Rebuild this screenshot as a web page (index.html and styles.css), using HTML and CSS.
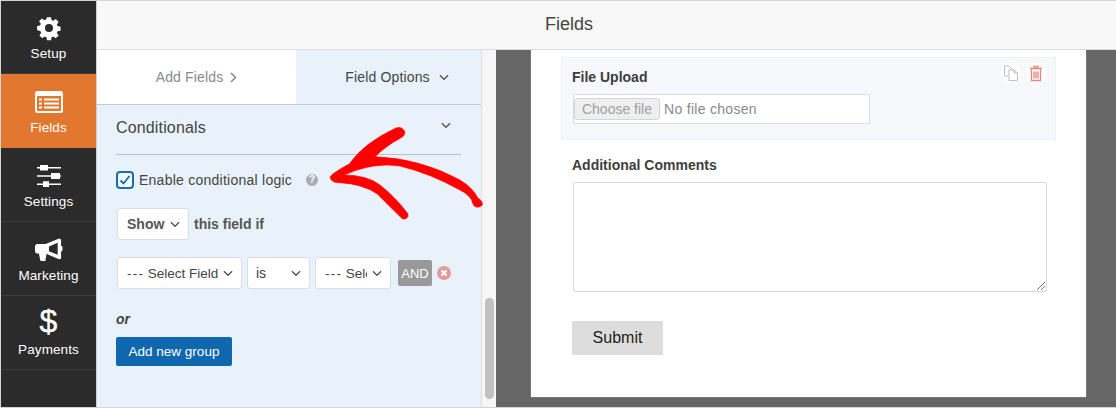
FILE: index.html
```html
<!DOCTYPE html>
<html lang="en">
<head>
<meta charset="utf-8">
<title>Fields</title>
<link rel="stylesheet" href="styles.css">
</head>
<body>
<div class="app">
  <nav class="sidebar">
    <a class="nav-item">
      <svg class="nav-icon" viewBox="0 0 28 28"><path fill-rule="evenodd" d="M11.6 1h4.8l.7 3.6 2 .8 3-2.1 3.4 3.4-2.1 3 .8 2 3.6.7v4.8l-3.6.7-.8 2 2.1 3-3.4 3.4-3-2.1-2 .8-.7 3.6h-4.8l-.7-3.6-2-.8-3 2.1-3.4-3.4 2.1-3-.8-2L-.2 16.4v-4.8l3.6-.7.8-2-2.1-3 3.4-3.4 3 2.1 2-.8zM14 9.2a4.8 4.8 0 1 0 0 9.6 4.8 4.8 0 0 0 0-9.6z" transform="translate(1.4 1.4) scale(.9)"/></svg>
      <span>Setup</span>
    </a>
    <a class="nav-item active">
      <svg class="nav-icon" viewBox="0 0 28 22"><path fill-rule="evenodd" d="M2.5 0h23A2.5 2.5 0 0 1 28 2.500v17a2.500 2.500 0 0 1-2.500 2.500h-23A2.500 2.500 0 0 1 0 19.500v-17A2.500 2.500 0 0 1 2.500 0zM2 5v14.500c0 .3.200.5.500.5h23c.3 0 .5-.2.500-.5V5zM4 7.500h3v2H4zM9 7.500h15v2H9zM4 11.500h3v2H4zM9 11.500h15v2H9zM4 15.500h3v2H4zM9 15.500h15v2H9z"/></svg>
      <span>Fields</span>
    </a>
    <a class="nav-item">
      <svg class="nav-icon nav-icon-sliders" viewBox="0 0 24 22"><path d="M0 2h3V0h8v2h13v1.500H11v2H3v-2H0zM0 10.300h14V8h9v2.300h1v1.500h-1V14h-9v-2.200H0zM0 18.500h6v-2.200h6v2.200h12V20H12v2H6v-2H0z"/></svg>
      <span>Settings</span>
    </a>
    <a class="nav-item">
      <svg class="nav-icon" viewBox="0 0 29 24"><path fill-rule="evenodd" d="M2.500 5.700H11L25 0l2 1v6.300l1.500 1.700v3L27 14v7l-2 .5-14-5.800H12L10.700 23.300H5.700L4 15.700H2.500C1 15.700 0 14.500 0 13V8.400C0 7 1 5.700 2.500 5.700zM14.500 8.300v5l9 3.500V4.500z"/></svg>
      <span>Marketing</span>
    </a>
    <a class="nav-item">
      <span class="nav-dollar">$</span>
      <span>Payments</span>
    </a>
  </nav>

  <main class="main">
    <header class="topbar">Fields</header>
    <div class="workspace">
      <section class="panel">
        <div class="tabs">
          <div class="tab tab-inactive">Add Fields
            <svg class="chev-right" viewBox="0 0 7 11"><path d="M1 1l4.500 4.500L1 10"/></svg>
          </div>
          <div class="tab tab-active">Field Options
            <svg class="chev" viewBox="0 0 11 7"><path d="M1 1l4.500 4.500L10 1"/></svg>
          </div>
        </div>
        <div class="panel-body">
          <div class="section-head">
            <h2>Conditionals</h2>
            <svg class="chev" viewBox="0 0 11 7"><path d="M1 1l4.500 4.500L10 1"/></svg>
          </div>
          <label class="check-row">
            <span class="checkbox"><svg viewBox="0 0 14 14"><path d="M2.500 7.500l3 3 6-7.500"/></svg></span>
            <span>Enable conditional logic</span>
            <span class="help">?</span>
          </label>
          <div class="show-row">
            <div class="select select-show"><span class="select-text">Show</span><svg class="chev" viewBox="0 0 11 7"><path d="M1 1l4.500 4.500L10 1"/></svg></div>
            <span class="medium">this field if</span>
          </div>
          <div class="rule-row">
            <div class="select select-field"><span class="select-text"><span class="dashes">---</span> Select Field ---</span><svg class="chev" viewBox="0 0 11 7"><path d="M1 1l4.500 4.500L10 1"/></svg></div>
            <div class="select select-is"><span class="select-text">is</span><svg class="chev" viewBox="0 0 11 7"><path d="M1 1l4.500 4.500L10 1"/></svg></div>
            <div class="select select-value"><span class="select-text"><span class="dashes">---</span> Select ---</span><svg class="chev" viewBox="0 0 11 7"><path d="M1 1l4.500 4.500L10 1"/></svg></div>
            <span class="and">AND</span>
            <svg class="remove" viewBox="0 0 14 14"><circle cx="7" cy="7" r="7"/><path d="M4.500 4.500l5 5M9.500 4.500l-5 5"/></svg>
          </div>
          <div class="or">or</div>
          <button class="add-group" type="button">Add new group</button>
        </div>
      </section>
      <div class="scroll-track"><div class="scroll-thumb"></div></div>
      <section class="preview">
        <div class="form-card">
          <div class="field field-selected">
            <div class="field-actions">
              <svg viewBox="0 0 20 20"><path d="M8 3H3.500v10H7M8 3l3 3v1M8 7h5l3.500 3v7.500H8zM13 7v3h3.500"/></svg>
              <svg class="trash" viewBox="0 0 20 20"><path d="M4 5.500h12M8 5V3.500h4V5M5.500 6.500v11h9v-11M8 8.500v7M10 8.500v7M12 8.500v7"/></svg>
            </div>
            <div class="field-label">File Upload</div>
            <div class="file-input"><span class="file-btn">Choose file</span><span class="file-name">No file chosen</span></div>
          </div>
          <div class="field field-comments">
            <div class="field-label">Additional Comments</div>
            <div class="textarea">
              <svg class="grip" viewBox="0 0 8 8"><path d="M0 8l8-8M4 8l4-4"/></svg>
            </div>
          </div>
          <button class="submit" type="button">Submit</button>
        </div>
      </section>
    </div>
  </main>

  <svg class="arrow" viewBox="0 0 510 300">
    <path d="M228 24Q245 18 254 34Q256 48 242 54Q200 76 165 110Q300 115 420 180Q460 205 472 232Q495 250 484 258Q465 268 458 250Q455 228 420 210Q330 160 240 138Q160 125 72 165Q140 165 180 195Q230 235 264 282Q266 298 248 297Q225 275 172 222Q130 192 60 188Q35 190 30 172Q35 160 88 132Q130 70 228 24Z"/>
  </svg>
</div>
</body>
</html>
```
FILE: styles.css
```css
* { box-sizing: border-box; }
html, body { margin: 0; padding: 0; }
body { font-family: "Liberation Sans", Arial, sans-serif; color: #444; background: #fff; }
.app { position: relative; display: flex; width: 1116px; height: 408px; overflow: hidden; border: 1px solid #d4d4d4; border-width: 1px 0 1px 1px; }

.sidebar { width: 95px; flex: none; background: #2b2b2b; display: flex; flex-direction: column; }
.nav-item { height: 74px; flex: none; display: flex; flex-direction: column; align-items: center; justify-content: flex-end; padding-bottom: 12px; gap: 5px; color: #fff; font-size: 13.500px; letter-spacing: .1px; line-height: 15px; border-bottom: 1px solid #3c3c3c; fill: #fff; }
.nav-item:first-child { height: 73px; }
.nav-item.active { background: #e27730; border-bottom-color: #e27730; }
.nav-icon { width: 28px; height: 26px; }
.nav-icon-sliders { width: 24px; }
.nav-dollar { font-size: 32px; line-height: 23px; height: 27px; -webkit-text-stroke: .4px #fff; }

.main { flex: 1; min-width: 0; display: flex; flex-direction: column; border-left: 1px solid #c9ced3; }
.topbar { height: 49px; flex: none; background: #f8f8f8; border-bottom: 1px solid #dcdcdc; display: flex; align-items: center; justify-content: center; font-size: 18px; color: #444; padding: 0 75px 1px 0; }
.workspace { flex: 1; min-height: 0; display: flex; }

.panel { width: 384px; flex: none; background: #e9f2fa; display: flex; flex-direction: column; }
.tabs { height: 55px; flex: none; display: flex; border-bottom: 1px solid #c3ccd6; }
.tab { display: flex; align-items: center; justify-content: center; font-size: 14px; letter-spacing: .15px; gap: 7px; }
.tab-inactive { width: 199px; background: #fff; color: #8a8a8a; }
.tab-active { flex: 1; color: #444; gap: 9px; padding-left: 17px; }
.chev, .chev-right { fill: none; stroke: #555; stroke-width: 1.500; flex: none; }
.chev { width: 10px; height: 7px; }
.chev-right { width: 7px; height: 11px; stroke: #888; }

.panel-body { padding: 0 20px 0 19px; flex: 1; display: flex; flex-direction: column; align-items: flex-start; }
.section-head { width: 345px; height: 50px; flex: none; border-bottom: 1px solid #b9c2cc; display: flex; justify-content: space-between; align-items: flex-start; padding: 13px 10px 0 0; }
.section-head h2 { margin: 0; font-size: 16px; letter-spacing: .15px; line-height: 20px; font-weight: 400; color: #444; }
.section-head .chev { margin-top: 4px; }
.check-row { display: flex; align-items: center; font-size: 14px; letter-spacing: .25px; height: 18px; margin-top: 16px; color: #444; }
.checkbox { width: 18px; height: 18px; border: 2px solid #1a6cb0; border-radius: 4px; background: #f2f7fc; margin-right: 5px; display: flex; }
.checkbox svg { width: 14px; height: 14px; fill: none; stroke: #1a6cb0; stroke-width: 1.800; }
.help { width: 12px; height: 12px; border-radius: 50%; background: #a9aeb3; color: #fff; font-size: 10px; line-height: 12px; font-weight: 700; text-align: center; margin-left: 14px; letter-spacing: 0; }
.show-row { display: flex; align-items: center; gap: 5px; margin: 19px 0 0 1px; font-size: 14px; }
.medium { font-weight: 700; color: #555; font-size: 14px; }
.select { height: 32px; background: #fff; border: 1px solid #d8dde2; border-radius: 3px; display: flex; align-items: center; font-size: 14px; color: #444; padding: 0 8px 0 9px; gap: 5px; }
.select-text { flex: 1; min-width: 0; white-space: nowrap; overflow: hidden; }
.select-show { width: 72px; font-weight: 700; color: #555; gap: 3px; }
.rule-row { display: flex; align-items: center; margin: 17px 0 0 1px; }
.select-field { width: 125px; margin-right: 5px; font-size: 13.500px; }
.select-value { font-size: 13.500px; }
.dashes { letter-spacing: 1.200px; }
.select-is { width: 63px; margin-right: 5px; padding-left: 8px; }
.select-value { width: 76px; margin-right: 7px; }
.and { width: 34px; height: 26px; background: #999; color: #fff; font-size: 13px; border-radius: 2px; display: flex; align-items: center; justify-content: center; }
.remove { width: 14px; height: 14px; margin-left: 5px; flex: none; fill: #e49a9a; }
.remove path { stroke: #fff; stroke-width: 2; fill: none; }
.or { font-style: italic; font-weight: 700; font-size: 14px; line-height: 16px; margin-top: 22px; color: #444; }
.add-group { margin-top: 10px; width: 116px; height: 29px; padding: 0; background: #0f67ad; color: #fff; border: 0; border-radius: 2px; font: 13.500px "Liberation Sans", Arial, sans-serif; }

.scroll-track { width: 15px; flex: none; background: #f6f6f6; border-left: 1px solid #d9dee3; padding: 248px 2px 8px 3px; }
.scroll-thumb { width: 9px; height: 101px; border-radius: 5px; background: #c1c1c1; }

.preview { flex: 1; min-width: 0; background: #666; padding: 0 30px 10px 35px; }
.form-card { height: 347px; background: #fff; padding: 7px 30px 0 30px; box-shadow: 0 0 1px #ccc; }
.field { position: relative; }
.field-selected { height: 83px; background: #f7f8fb; border: 1px solid #eef0f3; padding: 10px 11px 0 10px; }
.field-label { font-weight: 700; font-size: 14px; line-height: 18px; color: #3d3d3d; }
.field-actions { position: absolute; top: 5px; right: 9px; display: flex; gap: 5px; }
.field-actions svg { width: 20px; height: 20px; background: #fff; border-radius: 50%; fill: none; stroke: #bdbdbd; stroke-width: 1; }
.field-actions .trash { stroke: #e8847c; stroke-width: 1.300; }
.file-input { width: 297px; height: 30px; margin: 8px 0 0 1px; background: #fff; border: 1px solid #dcdcdc; display: flex; align-items: center; padding-left: 0; gap: 4px; font-size: 14px; color: #888; }
.file-name { letter-spacing: .3px; }
.file-btn { width: 86px; height: 22px; background: #efefef; border: 1px solid #d5d5d5; border-radius: 3px; color: #a0a0a0; display: flex; align-items: center; justify-content: center; }
.field-comments { padding: 16px 9px 0 11px; }
.textarea { position: relative; width: 474px; height: 110px; margin: 8px 0 0 1px; background: #fff; border: 1px solid #d9d9d9; border-radius: 2px; }
.grip { position: absolute; right: 1px; bottom: 1px; width: 8px; height: 8px; stroke: #777; stroke-width: 1; fill: none; }
.submit { display: block; margin: 29px 0 0 11px; width: 91px; height: 34px; background: #ddd; color: #222; border: 0; padding: 0; font: 16px "Liberation Sans", Arial, sans-serif; }

.arrow { position: absolute; left: 319px; top: 119px; width: 170px; height: 100px; fill: #f00; stroke: #f00; stroke-width: 2; stroke-linejoin: round; pointer-events: none; }
```
